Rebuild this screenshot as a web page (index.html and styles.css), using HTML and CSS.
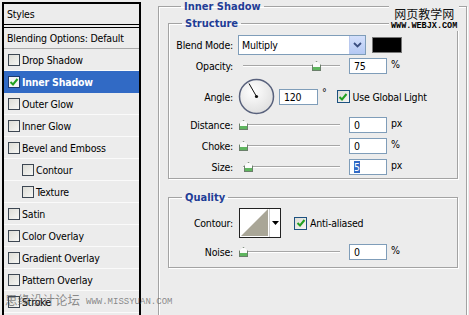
FILE: index.html
```html
<!doctype html>
<html>
<head>
	<meta charset="utf-8">
	<title>Layer Style - Inner Shadow</title>
	<link rel="stylesheet" href="styles.css">
</head>
<body>
	<div class="dialog">
		<div class="styles-list">
			<div class="list-head">Styles</div>
			<div class="list-blend">Blending Options: Default</div>
			<div class="item"><span class="check"></span>Drop Shadow</div>
			<div class="item selected"><span class="check"><svg width="10" height="10" viewBox="0 0 10 10"><polyline points="1.5,5 4,7.5 8.5,2" fill="none" stroke="#21a121" stroke-width="2"/></svg></span>Inner Shadow</div>
			<div class="item"><span class="check"></span>Outer Glow</div>
			<div class="item"><span class="check"></span>Inner Glow</div>
			<div class="item"><span class="check"></span>Bevel and Emboss</div>
			<div class="item sub"><span class="check"></span>Contour</div>
			<div class="item sub"><span class="check"></span>Texture</div>
			<div class="item"><span class="check"></span>Satin</div>
			<div class="item"><span class="check"></span>Color Overlay</div>
			<div class="item"><span class="check"></span>Gradient Overlay</div>
			<div class="item"><span class="check"></span>Pattern Overlay</div>
			<div class="item"><span class="check"></span>Stroke</div>
		</div>

		<fieldset class="group outer">
			<legend>Inner Shadow</legend>

			<fieldset class="group structure">
				<legend>Structure</legend>

				<div class="row row-blend">
					<span class="lbl">Blend Mode:</span>
					<div class="select">
						<span class="select-text">Multiply</span>
						<span class="select-btn"><svg width="9" height="6" viewBox="0 0 9 6"><polyline points="1,1 4.5,4.5 8,1" fill="none" stroke="#3b4f80" stroke-width="1.8"/></svg></span>
					</div>
					<span class="swatch"></span>
				</div>

				<div class="row row-opacity">
					<span class="lbl">Opacity:</span>
					<div class="slider"><span class="thumb" style="left: 69px"></span></div>
					<span class="field">75</span><span class="unit">%</span>
				</div>

				<div class="row row-angle">
					<span class="lbl">Angle:</span>
					<svg class="dial" width="37" height="37" viewBox="0 0 37 37">
						<defs>
							<radialGradient id="dialfill" cx="40%" cy="35%" r="70%">
								<stop offset="0" stop-color="#ffffff"/>
								<stop offset="1" stop-color="#dedede"/>
							</radialGradient>
						</defs>
						<circle cx="18.5" cy="18.5" r="17" fill="url(#dialfill)" stroke="#58617c" stroke-width="1.5"/>
						<line x1="18.5" y1="18.5" x2="11" y2="5.5" stroke="#111" stroke-width="1"/>
						<circle cx="18.5" cy="18.5" r="1.6" fill="#111"/>
					</svg>
					<span class="field field-angle">120</span>
					<span class="degree">°</span>
					<span class="check big"><svg width="10" height="10" viewBox="0 0 10 10"><polyline points="1.5,5 4,7.5 8.5,2" fill="none" stroke="#21a121" stroke-width="2"/></svg></span>
					<span class="check-label">Use Global Light</span>
				</div>

				<div class="row row-distance">
					<span class="lbl">Distance:</span>
					<div class="slider"><span class="thumb" style="left: -4px"></span></div>
					<span class="field">0</span><span class="unit">px</span>
				</div>

				<div class="row row-choke">
					<span class="lbl">Choke:</span>
					<div class="slider"><span class="thumb" style="left: -4px"></span></div>
					<span class="field">0</span><span class="unit">%</span>
				</div>

				<div class="row row-size">
					<span class="lbl">Size:</span>
					<div class="slider"><span class="thumb" style="left: 1px"></span></div>
					<span class="field"><span class="sel">5</span></span><span class="unit">px</span>
				</div>
			</fieldset>

			<fieldset class="group quality">
				<legend>Quality</legend>

				<div class="row row-contour">
					<span class="lbl">Contour:</span>
					<div class="contour">
						<svg class="contour-preview" width="29" height="28" viewBox="0 0 29 28">
							<rect width="29" height="28" fill="#ffffff"/>
							<polygon points="1,27 28,0 28,27" fill="#a9a697"/>
						</svg>
						<span class="contour-btn"><svg width="7" height="4" viewBox="0 0 7 4"><polygon points="0,0 7,0 3.5,4" fill="#000"/></svg></span>
					</div>
					<span class="check big"><svg width="10" height="10" viewBox="0 0 10 10"><polyline points="1.5,5 4,7.5 8.5,2" fill="none" stroke="#21a121" stroke-width="2"/></svg></span>
					<span class="check-label">Anti-aliased</span>
				</div>

				<div class="row row-noise">
					<span class="lbl">Noise:</span>
					<div class="slider"><span class="thumb" style="left: -4px"></span></div>
					<span class="field">0</span><span class="unit">%</span>
				</div>
			</fieldset>
		</fieldset>

		<!-- site watermarks burnt into the original screenshot -->
		<div class="wm-top">
			<div class="wm-cn">网页教学网</div>
			<div class="wm-url">WWW.WEBJX.COM</div>
		</div>
		<div class="wm-bottom">
			<span class="wm-cn2">思缘设计论坛</span>
			<span class="wm-url2">WWW.MISSYUAN.COM</span>
		</div>
	</div>
</body>
</html>
```

FILE: styles.css
```css
body {
	margin: 0;
	background-color: #ececec;
	color: #000;
	font-family: "DejaVu Sans Condensed", "DejaVu Sans", sans-serif;
	font-stretch: condensed;
	font-size: 10.5px;
	letter-spacing: -0.2px;
	overflow: hidden;
}

.dialog {
	position: relative;
	display: flex;
	align-items: flex-start;
	width: 469px;
	height: 315px;
	overflow: hidden;
}

/* left hand list of effects */

.styles-list {
	width: 135px;
	height: 340px;
	margin: 2px 0 0 2px;
	border: 2px solid #000;
	border-bottom: none;
	flex-shrink: 0;
}

.list-head {
	height: 20px;
	line-height: 20px;
	padding-left: 3px;
	border-bottom: 1px solid #000;
	margin-bottom: 2px;
}

.list-blend {
	height: 20px;
	line-height: 20px;
	padding-left: 3px;
	border-top: 1px solid #000;
	border-bottom: 1px solid #a9a9a9;
}

.item {
	display: flex;
	align-items: center;
	gap: 2px;
	height: 21px;
	padding-left: 4px;
	border-bottom: 1px solid #fafafa;
}

.item.sub {
	padding-left: 18px;
}

.item.selected {
	background-color: #316ac5;
	color: #fff;
	font-weight: bold;
	border-bottom-color: #316ac5;
}

.check {
	display: inline-flex;
	align-items: center;
	justify-content: center;
	box-sizing: border-box;
	width: 12px;
	height: 12px;
	border: 1px solid #3c4652;
	background: linear-gradient(135deg, #dcdcd6, #f6f6f4);
	flex-shrink: 0;
}

.item.selected .check {
	background: #f4f4f4;
	border-color: #1c3a6e;
}

.check.big {
	width: 13px;
	height: 13px;
	border-color: #1c5180;
}

.check-label {
	margin-left: 3px;
}

/* right hand settings */

.group {
	margin: 0;
	padding: 0;
	border: 1px solid #a3a3a3;
	box-shadow: 1px 1px 0 #fff, inset 1px 1px 0 #fff;
	min-width: 0;
}

.group legend {
	padding: 0 3px;
	color: #1f3d96;
	font-weight: bold;
	font-size: 11px;
	line-height: 13px;
	letter-spacing: 0;
}

.outer {
	width: 290px;
	height: 330px;
	margin: 0 0 0 17px;
	padding: 4px 8px 0 9px;
}

.outer > legend {
	margin-left: 13px;
}

.structure {
	height: 162px;
	padding: 5px 0 0 0;
	box-sizing: border-box;
}

.structure > legend,
.quality > legend {
	margin-left: 13px;
}

.quality {
	margin-top: 12px;
	padding: 4px 0 7px 0;
}

.row {
	display: flex;
	align-items: center;
	height: 16px;
}

.lbl {
	width: 64px;
	text-align: right;
	flex-shrink: 0;
}

.row-blend {
	height: 20px;
}

.row-opacity {
	margin-top: 3px;
}

.row-angle {
	height: 37px;
	margin-top: 4px;
}

.row-distance {
	margin-top: 2px;
}

.row-choke,
.row-size {
	margin-top: 5px;
}

.row-contour {
	height: 30px;
}

.row-noise {
	margin-top: 6px;
}

.select {
	display: flex;
	align-items: center;
	box-sizing: border-box;
	width: 128px;
	height: 20px;
	margin-left: 5px;
	border: 1px solid #7f9db9;
	background-color: #fff;
}

.select-text {
	flex: 1;
	padding-left: 3px;
}

.select-btn {
	display: flex;
	align-items: center;
	justify-content: center;
	width: 15px;
	height: 18px;
	border-left: 1px solid #b9c9ef;
	background: linear-gradient(#d4e0fb, #b4c8f3);
}

.swatch {
	box-sizing: border-box;
	width: 30px;
	height: 16px;
	margin-left: 6px;
	background-color: #000;
	border: 1px solid #777;
}

.slider {
	position: relative;
	width: 97px;
	height: 2px;
	margin-left: 10px;
	border-top: 1px solid #a6a6a6;
	border-bottom: 1px solid #fff;
	box-sizing: border-box;
}

.thumb {
	position: absolute;
	top: -5px;
	width: 9px;
	height: 10px;
	box-sizing: border-box;
	background: linear-gradient(#fbfbfb 65%, #5fb65f 65%);
	border: 1px solid #6b7f6b;
	clip-path: polygon(50% 0, 100% 40%, 100% 100%, 0 100%, 0 40%);
}

.field {
	box-sizing: border-box;
	width: 38px;
	height: 16px;
	line-height: 14px;
	margin-left: 9px;
	padding-left: 4px;
	border: 1px solid #7f9db9;
	background-color: #fff;
}

.field-angle {
	width: 39px;
	margin-left: 4px;
}

.sel {
	background-color: #316ac5;
	color: #fff;
}

.unit {
	margin-left: 4px;
	align-self: flex-start;
	line-height: 12px;
}

.dial {
	margin-left: 5px;
}

.degree {
	margin-left: 4px;
	margin-right: 10px;
	align-self: flex-start;
	margin-top: 8px;
}

.contour {
	display: flex;
	box-sizing: border-box;
	width: 42px;
	height: 30px;
	margin-left: 6px;
	margin-right: 13px;
	border: 1px solid #222;
	background-color: #fff;
}

.contour-btn {
	display: flex;
	align-items: center;
	justify-content: center;
	flex: 1;
	border-left: 1px solid #cfcfcf;
}

/* watermarks */

.wm-top {
	position: absolute;
	left: 389px;
	top: 6px;
	padding: 0 2px;
	background-color: #ececec;
	letter-spacing: 0;
}

.wm-cn {
	font-family: "Noto Sans CJK SC", sans-serif;
	font-size: 12px;
	line-height: 16px;
	color: #111;
	text-align: center;
}

.wm-url {
	font-family: "Liberation Mono", monospace;
	font-weight: bold;
	font-size: 8.5px;
	line-height: 9px;
	color: #000;
}

.wm-bottom {
	position: absolute;
	left: 5px;
	top: 291px;
	display: flex;
	align-items: flex-end;
	gap: 6px;
	color: rgba(70, 70, 70, 0.6);
	letter-spacing: 0;
}

.wm-cn2 {
	font-family: "Noto Sans CJK SC", sans-serif;
	font-size: 12.5px;
	line-height: 18px;
}

.wm-url2 {
	font-family: "Liberation Mono", monospace;
	font-size: 9px;
	line-height: 14px;
	color: rgba(90, 90, 90, 0.7);
}
```
